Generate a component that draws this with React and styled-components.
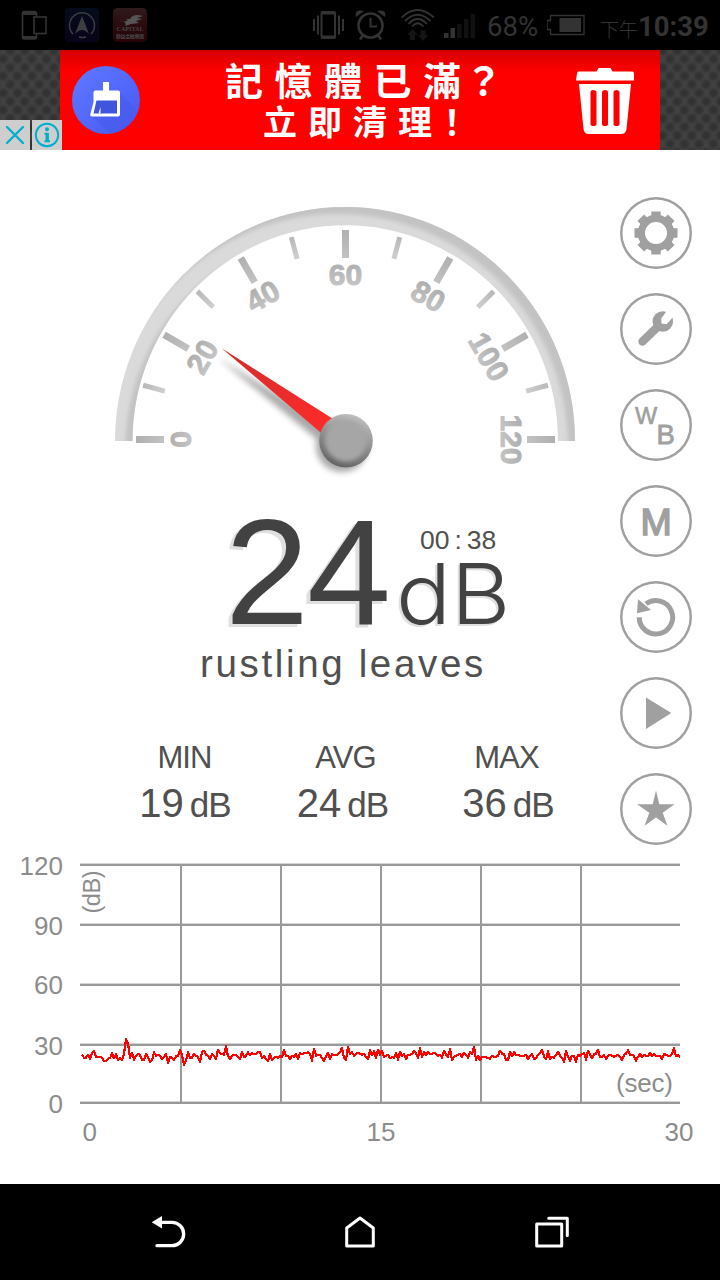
import React from 'react'
import styled, { createGlobalStyle } from 'styled-components'

const GlobalStyle = createGlobalStyle`
  body {
    margin: 0;
    background: #fff;
    font-family: 'Liberation Sans', 'Noto Sans CJK TC', sans-serif;
  }

  svg {
    display: block;
    flex: none;
  }
`;

const ICON = '#a0a0a0';
const STATUS = '#333';

const CX = 345.5;
const CY = 439.5;

// distance below the 30 dB line, in thirds of a pixel, one every 2px
const SAMPLES = [
  29, 40, 39, 31, 43, 25, 19, 38, 38, 36, 39, 49, 48, 42, 41, 26, 41, 29, 47, 41,
  45, 27, -16, -3, 39, 25, 45, 34, 28, 31, 47, 47, 28, 37, 51, 47, 23, 34, 30, 34,
  44, 37, 29, 54, 37, 40, 45, 35, 35, 17, 30, 60, 47, 23, 39, 39, 28, 33, 37, 53,
  23, 18, 30, 33, 44, 27, 33, 44, 15, 25, 29, 30, 5, 35, 43, 33, 32, 32, 37, 44,
  21, 38, 34, 23, 32, 26, 28, 27, 21, 23, 39, 34, 44, 49, 29, 45, 39, 36, 41, 35,
  37, 17, 35, 33, 44, 33, 37, 29, 43, 25, 29, 26, 25, 23, 27, 48, 13, 33, 31, 31,
  41, 48, 37, 25, 43, 28, 32, 32, 29, 23, 10, 41, 45, 7, 29, 23, 34, 28, 25, 28,
  31, 27, 38, 44, 17, 32, 20, 39, 15, 31, 19, 38, 33, 31, 41, 37, 39, 25, 45, 21,
  35, 27, 44, 31, 30, 28, 19, 25, 39, 11, 36, 23, 31, 23, 28, 27, 24, 29, 34, 30,
  39, 18, 30, 37, 14, 46, 37, 34, 31, 27, 37, 25, 30, 39, 23, 29, 7, 45, 33, 47,
  36, 38, 37, 41, 42, 34, 36, 36, 33, 18, 27, 29, 47, 47, 21, 35, 23, 30, 30, 34,
  35, 35, 30, 44, 34, 29, 43, 41, 30, 25, 15, 35, 44, 20, 43, 37, 39, 31, 21, 34,
  39, 51, 19, 37, 49, 33, 34, 51, 30, 33, 29, 25, 45, 19, 31, 41, 29, 27, 16, 37,
  37, 32, 43, 33, 30, 35, 36, 33, 31, 37, 47, 31, 28, 17, 31, 30, 34, 48, 37, 29,
  37, 30, 35, 35, 24, 34, 29, 35, 33, 35, 43, 28, 31, 33, 35, 28, 11, 35, 32, 37,
];

const STATS = [
  { label: 'MIN', value: 19, shift: 1 },
  { label: 'AVG', value: 24, shift: -6 },
  { label: 'MAX', value: 36, shift: 3 },
];

function StatusBar() {
  return (
    <Status>
      <StatusIcon $left={20} width="28" height="34" viewBox="20 8 28 34" fill="none" stroke={STATUS} strokeWidth="1.6">
        <path d="M36.5 16V13.5Q36.500 11.500 34.500 11.500H24.500Q22.500 11.500 22.500 13.500V37Q22.500 39 24.500 39H34.500Q36.500 39 36.500 37V34" />
        <path d="M22 13.500H37M22 37.500H37" strokeWidth="3" />
        <rect x="34" y="17" width="12" height="16.500" />
      </StatusIcon>
      <StatusIcon $left={17} width="34" height="34" viewBox="0 0 34 34">
        <defs>
          <linearGradient id="appBlue" x1="0" y1="0" x2="0" y2="1">
            <stop offset="0" stopColor="#050c1c" />
            <stop offset="1" stopColor="#08031a" />
          </linearGradient>
        </defs>
        <rect width="34" height="34" rx="4" fill="url(#appBlue)" />
        <path d="M8 26A12.500 12.500 0 1 1 26 26M14 29A12.500 12.500 0 0 0 21 29" fill="none" stroke="#3d3d42" strokeWidth="1.500" />
        <path d="M17 8L24 26Q17 18 10 26Z" fill="#3d3d42" />
      </StatusIcon>
      <StatusIcon $left={14} width="34" height="34" viewBox="0 0 34 34">
        <defs>
          <linearGradient id="appRed" x1="0" y1="0" x2="0" y2="1">
            <stop offset="0" stopColor="#301b1c" />
            <stop offset="0.45" stopColor="#2b0c0f" />
            <stop offset="1" stopColor="#260307" />
          </linearGradient>
        </defs>
        <rect width="34" height="34" rx="4.500" fill="url(#appRed)" />
        <path d="M6 12Q11 15 15 12Q10 10 17 11Q20 5 30 8L24 10L29 11L23 13L26 15L18 16L12 18Q15 14 6 12Z" fill="#555" />
        <text x="17" y="22.500" textAnchor="middle" fontSize="6" textLength="27" fontFamily="Liberation Serif, serif" fontWeight="700" fill="#454545">CAPITAL</text>
        <text x="17" y="30" textAnchor="middle" fontSize="5" textLength="28" fontFamily="Noto Sans CJK TC, sans-serif" fontWeight="700" fill="#454545">群益金融集團</text>
      </StatusIcon>
      <StatusIcon $left={165} width="34" height="34" viewBox="312 8 34 34" fill="none" stroke={STATUS} strokeWidth="2">
        <rect x="321.500" y="12" width="13.500" height="26" rx="2" />
        <path d="M321 13H335.500M321 37H335.500" strokeWidth="3" />
        <path d="M314 19V31M318 15.500V34.500M339 15.500V34.500M343 19V31" />
      </StatusIcon>
      <StatusIcon $left={9} width="34" height="34" viewBox="355 8 34 34" fill="none" stroke={STATUS} strokeWidth="2.600">
        <circle cx="370.500" cy="25.500" r="12" />
        <path d="M370.500 18V26.500H377" strokeWidth="2" />
        <path d="M363 35L360 39.500M378 35L381 39.500" />
        <path d="M356 17Q354 9 364 11Z M385 17Q387 9 377 11Z" fill={STATUS} stroke="none" />
      </StatusIcon>
      <StatusIcon $left={11} width="38" height="34" viewBox="400 8 38 34" fill="none" stroke={STATUS} strokeWidth="1.800">
        <path d="M401.500 17.500Q417.500 2.500 434 17.500M405 21Q417.500 8.500 430.500 21M408.500 24Q417.500 14 427 24M412 26.500Q417.500 20 423.500 26.500" />
        <path d="M412.500 29L407 35H410V40H415V35H418ZM423 41L428.500 35H425.500V30.500H420.500V35H418Z" fill="#151515" stroke="none" />
      </StatusIcon>
      <StatusIcon $left={6} width="34" height="34" viewBox="444 8 34 34">
        <path d="M444 33H448.500V38H444ZM450.500 28H455V38H450.500Z" fill={STATUS} />
        <path d="M457 24H461.500V38H457ZM464 19H468.500V38H464ZM470.500 14H475V38H470.500Z" fill="#111" />
      </StatusIcon>
      <Percent>68%</Percent>
      <StatusIcon $left={8} width="40" height="34" viewBox="548 8 40 34" fill="none" stroke={STATUS} strokeWidth="1.300">
        <path d="M551.500 15.500H585V34.500H551.500V29.500H548V20.500H551.500Z" />
        <rect x="560.500" y="18" width="21.500" height="14" fill={STATUS} stroke="none" />
      </StatusIcon>
      <Period>下午</Period>
      <Clock>10:39</Clock>
    </Status>
  )
}

function AdBanner() {
  return (
    <Ad>
      <AdBody>
        <svg width="68" height="68" viewBox="0 0 68 68">
          <defs>
            <linearGradient id="adBlue" x1="0" y1="0" x2="1" y2="1">
              <stop offset="0" stopColor="#5f78ff" />
              <stop offset="0.6" stopColor="#5066fb" />
              <stop offset="1" stopColor="#4557ee" />
            </linearGradient>
          </defs>
          <circle cx="34" cy="34" r="34" fill="url(#adBlue)" />
          <path d="M47 26L65 44Q58 64 38 67L19 50Z" fill="#4358e3" opacity="0.4" />
          <path d="M31 16H37V24.500H46Q48 24.500 48 26.500V48.500Q48 50.500 46 50.500H20Q17.500 50.500 18.500 47.500L21.500 36V26.500Q21.500 24.500 23.500 24.500H31Z" fill="#fff" />
          <path d="M24.500 34.500H45V47.500H21.500Z" fill="#4055dd" />
          <path d="M26.500 47.500L28.500 41V47.500Z" fill="#fff" />
        </svg>
        <AdText>
          <AdLine $size={38} $gap={11.5}>記憶體已滿<AdMark>？</AdMark></AdLine>
          <AdLine $size={34} $gap={11}>立即清理<AdMark>！</AdMark></AdLine>
        </AdText>
        <svg width="60" height="70" viewBox="575 65 60 70" fill="#fff">
          <path d="M577 73.500Q577 71.500 579 71.500H596.500L598.500 68H610.500L612.500 71.500H632Q634 71.500 634 73.500V80.500H576Z" />
          <path fillRule="evenodd" d="M579 84H631L626.500 129Q626 134 621 134H589Q584 134 583.500 129Z M593 90Q590.500 90 590.500 92.500V124Q590.500 126 593.500 126T596.500 124V92.500Q596.500 90 593 90Z M605 90Q602 90 602 92.500V124Q602 126 605 126T608 124V92.500Q608 90 605 90Z M616.500 90Q613.500 90 613.500 92.500V124Q613.500 126 616.500 126T619.500 124V92.500Q619.500 90 616.500 90Z" />
        </svg>
      </AdBody>
      <AdChoices>
        <AdChip>
          <svg width="30" height="30" viewBox="0 0 30 30" stroke="#00aecd" strokeWidth="2.300" strokeLinecap="round">
            <path d="M7 7L23 23M23 7L7 23" />
          </svg>
        </AdChip>
        <AdChip>
          <svg width="30" height="30" viewBox="0 0 30 30" fill="none" stroke="#00aecd">
            <circle cx="15" cy="15" r="11.200" strokeWidth="2" />
            <circle cx="15" cy="9.300" r="2" fill="#00aecd" stroke="none" />
            <path d="M12.500 13.700H15.500V21M12.500 21.200H18" strokeWidth="2" />
            <path d="M15.200 13V22" strokeWidth="3.400" />
          </svg>
        </AdChip>
      </AdChoices>
    </Ad>
  )
}

const BAND = 'M115 441A230 234 0 0 1 575 441H558A212.750 215.700 0 0 0 132.500 441Z';

function Gauge() {
  const ticks = Array.from({ length: 13 }, (_, i) => i);

  return (
    <GaugeSvg width="490" height="305" viewBox="100 195 490 305">
      <defs>
        <clipPath id="bandClip"><path d={BAND} /></clipPath>
        <filter id="soft" x="-20%" y="-20%" width="140%" height="140%"><feGaussianBlur stdDeviation="2" /></filter>
        <filter id="shade" x="-30%" y="-30%" width="160%" height="160%"><feGaussianBlur stdDeviation="3" /></filter>
        <linearGradient id="tick" x1="0" y1="0" x2="0" y2="1">
          <stop offset="0" stopColor="#b0b0b0" />
          <stop offset="1" stopColor="#c2c2c2" />
        </linearGradient>
        <linearGradient id="tickMinor" x1="0" y1="0" x2="0" y2="1">
          <stop offset="0" stopColor="#b8b8b8" />
          <stop offset="1" stopColor="#cfcfcf" />
        </linearGradient>
        <linearGradient id="digit" x1="0" y1="0" x2="0" y2="1">
          <stop offset="0.1" stopColor="#acacac" />
          <stop offset="0.9" stopColor="#c6c6c6" />
        </linearGradient>
        <linearGradient id="hub" x1="0.7" y1="0" x2="0.35" y2="1">
          <stop offset="0" stopColor="#c2c2c2" />
          <stop offset="0.5" stopColor="#8e8e8e" />
          <stop offset="1" stopColor="#626262" />
        </linearGradient>
        <linearGradient id="needle" gradientUnits="userSpaceOnUse" x1="222" y1="349" x2="330" y2="430">
          <stop offset="0" stopColor="#d22a2a" />
          <stop offset="0.5" stopColor="#e82c2c" />
          <stop offset="1" stopColor="#ff2a2a" />
        </linearGradient>
      </defs>

      <path d={BAND} fill="#dadada" />
      <g clipPath="url(#bandClip)">
        <path
          d="M0 100H700V600H0Z M108 470V448A230 234 0 0 1 568 448V470H551V448A212.750 215.700 0 0 0 125.500 448V470Z"
          fill="#c3c3c3"
          fillRule="evenodd"
          filter="url(#soft)"
        />
      </g>

      {ticks.map(i => {
        const major = i % 2 === 0;
        const w = major ? 7 : 5;
        return (
          <rect
            key={i}
            x={CX - w / 2}
            y={CY - 209.5}
            width={w}
            height={major ? 28 : 22.5}
            fill={major ? 'url(#tick)' : 'url(#tickMinor)'}
            transform={`rotate(${i * 15 - 90} ${CX} ${CY})`}
          />
        )
      })}

      {ticks.filter(i => i % 2 === 0).map(i => (
        <text
          key={i}
          x={CX}
          y={CY - 155}
          textAnchor="middle"
          fontSize="30"
          fontWeight="700"
          fill="url(#digit)"
          stroke="url(#digit)"
          strokeWidth="1"
          transform={`rotate(${i * 15 - 90} ${CX} ${CY})`}
        >
          {i * 10}
        </text>
      ))}

      <g filter="url(#shade)" opacity="0.34">
        <path d="M217 357L340 433L326 447Z" />
        <circle cx="342" cy="446" r="26" />
      </g>
      <path d="M221.700 348.300L343 425.300L330.600 441Z" fill="url(#needle)" />
      <circle cx="346" cy="440.700" r="26.800" fill="url(#hub)" />
      <circle cx="346" cy="440.500" r="21" fill="#a6a6a6" filter="url(#soft)" />
    </GaugeSvg>
  )
}

function Chart() {
  const points = SAMPLES.map((s, i) => `${82 + i * 2},${(1044.6 + s / 3).toFixed(1)}`).join(' ');

  return (
    <ChartSvg width="720" height="334" viewBox="0 850 720 334">
      {[864, 924, 984, 1044, 1102].map(y => (
        <g key={y}>
          <rect x="80" y={y - 1} width="600" height="1" fill="#d4d4d4" />
          <rect x="80" y={y} width="600" height="2" fill="#999" />
        </g>
      ))}
      {[180, 280, 380, 480, 580].map(x => (
        <rect key={x} x={x} y="865" width="2" height="238" fill="#999" />
      ))}
      <g textAnchor="end">
        <text x="63" y="875">120</text>
        <text x="63" y="934.500">90</text>
        <text x="63" y="993.800">60</text>
        <text x="63" y="1054.500">30</text>
        <text x="63" y="1113">0</text>
      </g>
      <g textAnchor="middle">
        <text x="89.700" y="1140.500">0</text>
        <text x="381" y="1140.500">15</text>
        <text x="679" y="1140.500">30</text>
      </g>
      <text x="616" y="1091.700" fontSize="26" textLength="57">(sec)</text>
      <text transform="translate(99.500 913.500) rotate(-90)" fontSize="23.500" textLength="43">(dB)</text>
      <polyline points={points} fill="none" stroke="#f00" strokeWidth="2.200" strokeLinejoin="round" shapeRendering="crispEdges" />
    </ChartSvg>
  )
}

function ToolButton({ children }) {
  return (
    <RoundButton>
      <svg width="72" height="72" viewBox="0 0 72 72" fill={ICON}>{children}</svg>
    </RoundButton>
  )
}

function Tools() {
  return (
    <ToolColumn>
      <ToolButton>
        <circle cx="36" cy="36" r="14.600" fill="none" stroke={ICON} strokeWidth="7.200" />
        {[0, 45, 90, 135, 180, 225, 270, 315].map(a => (
          <path key={a} d="M29.500 20L31.300 18V14.500H40.700V18L42.500 20Z" transform={`rotate(${a} 36 36)`} />
        ))}
      </ToolButton>
      <ToolButton>
        <path d="M22.500 48.500L40 31.500" stroke={ICON} strokeWidth="8.400" strokeLinecap="round" />
        <circle cx="42.800" cy="28.500" r="10.300" />
        <path d="M47.500 17L41.200 25.500L41.500 30.500L46.500 31.300L54 23L57 15Z" fill="#fff" />
      </ToolButton>
      <ToolButton>
        <text x="15" y="35" fontSize="23.500" stroke={ICON} strokeWidth="0.600">W</text>
        <text x="36.500" y="55.300" fontSize="27.500" stroke={ICON} strokeWidth="0.800">B</text>
      </ToolButton>
      <ToolButton>
        <text x="36.200" y="49.800" fontSize="37.500" stroke={ICON} strokeWidth="1.600" textAnchor="middle">M</text>
      </ToolButton>
      <ToolButton>
        <path d="M19.200 36.200A16.700 16.700 0 1 0 26 22.800" fill="none" stroke={ICON} strokeWidth="5" />
        <path d="M18 18.300L17 32.200L31 29Z" />
      </ToolButton>
      <ToolButton>
        <path d="M26 20.500V52L51.300 36Z" />
      </ToolButton>
      <ToolButton>
        <path d="M36 17.500L39.300 31.300H54.500L42.700 39.700L47.500 52.800L36 44.600L24.500 52.800L29.300 39.700L17 31.300H32.700Z" />
      </ToolButton>
    </ToolColumn>
  )
}

function NavBar() {
  return (
    <Nav>
      <svg width="40" height="40" viewBox="148 1212 40 40" fill="none" stroke="#fff" strokeWidth="3.300" strokeLinecap="round">
        <path d="M161 1222.300H172A11.700 11.700 0 0 1 172 1245.700H157" />
        <path d="M151.700 1222.300L162 1216V1228.500Z" fill="#fff" stroke="none" />
      </svg>
      <svg width="40" height="40" viewBox="340 1212 40 40" fill="none" stroke="#fff" strokeWidth="3" strokeLinejoin="round">
        <path d="M346.700 1246V1228L360 1218L373.300 1228V1246Z" />
      </svg>
      <svg width="40" height="40" viewBox="532 1212 40 40" fill="none" stroke="#fff" strokeWidth="3" strokeLinecap="round" strokeLinejoin="round">
        <rect x="536.700" y="1224" width="25" height="22" />
        <path d="M548.700 1218.300H567.300V1235.500" />
      </svg>
    </Nav>
  )
}

const App = () => {
  return (
    <Screen>
      <GlobalStyle />
      <StatusBar />
      <AdBanner />
      <Main>
        <Meter>
          <Gauge />
          <Readout>
            <Level>24</Level>
            <div>
              <Elapsed>00<Colon>:</Colon>38</Elapsed>
              <Unit>dB</Unit>
            </div>
          </Readout>
          <Noise>rustling leaves</Noise>
          <Stats>
            {STATS.map(s => (
              <Stat key={s.label} $shift={s.shift}>
                <h3>{s.label}</h3>
                <p>{s.value}<small>dB</small></p>
              </Stat>
            ))}
          </Stats>
        </Meter>
        <Tools />
      </Main>
      <Chart />
      <NavBar />
    </Screen>
  )
}

const Screen = styled.div`
  display: flex;
  flex-direction: column;
  width: 720px;
  height: 1280px;
  overflow: hidden;
  background: #fff;
`;

const Status = styled.header`
  display: flex;
  align-items: center;
  height: 50px;
  background: #000;
  color: ${STATUS};
  font-family: Roboto, 'Noto Sans CJK TC', sans-serif;
  white-space: nowrap;
`;

const StatusIcon = styled.svg`
  margin-left: ${props => props.$left}px;
`;

const Percent = styled.span`
  width: 52px;
  margin-left: 9px;
  padding-top: 3px;
  font-size: 27.5px;
`;

const Period = styled.span`
  width: 38px;
  margin-left: 13px;
  padding-top: 6px;
  font-size: 19px;
  font-weight: 300;
`;

const Clock = styled.span`
  padding-top: 3px;
  font-size: 27.5px;
  font-weight: 700;
`;

const Ad = styled.section`
  position: relative;
  display: flex;
  justify-content: center;
  height: 100px;
  background-color: #414141;
  background-image:
    radial-gradient(circle at 50% 50%, #303030 0, #343434 3px, transparent 6px),
    radial-gradient(circle at 50% 50%, #303030 0, #343434 3px, transparent 6px);
  background-size: 14.5px 17px;
  background-position: 3px -8px, 10.2px 0.5px;
`;

const AdBody = styled.div`
  display: flex;
  align-items: center;
  width: 600px;
  padding: 0 25px 0 12px;
  box-sizing: border-box;
  background: linear-gradient(#d60000, #f00 22px);
`;

const AdText = styled.div`
  flex: 1;
  padding-bottom: 1px;
`;

const AdLine = styled.div`
  padding-left: ${props => (props.$size > 36 ? 85 : 123)}px;
  color: #fff;
  font-family: 'Noto Sans CJK TC', sans-serif;
  font-size: ${props => props.$size}px;
  font-weight: 700;
  line-height: 42px;
  letter-spacing: ${props => props.$gap}px;
  white-space: nowrap;
`;

const AdMark = styled.span`
  margin-left: -8px;
`;

const AdChoices = styled.div`
  position: absolute;
  left: 0;
  bottom: 0;
  display: flex;
  gap: 2px;
`;

const AdChip = styled.div`
  width: 30px;
  height: 30px;
  background: #cecece;
`;

const Main = styled.main`
  display: flex;
  height: 700px;
`;

const Meter = styled.div`
  width: 620px;
`;

const GaugeSvg = styled.svg`
  margin: 45px 0 0 100px;
`;

const Readout = styled.div`
  display: flex;
  height: 140px;
  padding-left: 225px;
  color: #424242;
`;

const Level = styled.div`
  width: 173px;
  padding-top: 2px;
  font-size: 151px;
  line-height: 140px;
  letter-spacing: -2px;
  text-shadow: -4px 3px 0 #e0e0e0;
`;

const Elapsed = styled.div`
  padding: 25px 0 4px 22px;
  color: #505050;
  font-size: 26.5px;
  line-height: 30px;
`;

const Colon = styled.span`
  margin: 0 5px;
`;

const Unit = styled.div`
  font-family: Inter, sans-serif;
  font-size: 84px;
  font-weight: 300;
  line-height: 70px;
  text-shadow: -2px 2px 0 #e0e0e0;
  transform: translateX(-2px) scaleX(1.09);
  transform-origin: 0 50%;
`;

const Noise = styled.div`
  margin-top: -1px;
  padding-left: 200px;
  color: #505050;
  font-size: 38.5px;
  line-height: 50px;
  letter-spacing: 2.65px;
`;

const Stats = styled.div`
  display: grid;
  grid-template-columns: repeat(3, 161px);
  padding: 48px 0 0 104px;
`;

const Stat = styled.div`
  color: #505050;
  text-align: center;

  h3 {
    margin: 0;
    font-size: 31px;
    font-weight: 400;
    line-height: 41px;
    letter-spacing: -0.9px;
  }

  p {
    margin: 0;
    font-size: 40px;
    line-height: 50px;
    text-indent: ${props => props.$shift}px;
  }

  small {
    margin-left: 6px;
    font-size: 35px;
    letter-spacing: -1px;
  }
`;

const ToolColumn = styled.div`
  display: flex;
  flex-direction: column;
  gap: 24px;
  padding-top: 47px;
`;

const RoundButton = styled.button`
  width: 72px;
  height: 72px;
  padding: 0;
  border: none;
  border-radius: 50%;
  background: none;
  box-shadow: inset 0 0 0 2.5px ${ICON};
  cursor: pointer;
  font-family: inherit;
`;

const ChartSvg = styled.svg`
  text {
    fill: #8c8c8c;
  }

  g text {
    font-size: 26px;
  }
`;

const Nav = styled.nav`
  display: grid;
  grid-template-columns: repeat(3, 192px);
  justify-content: center;
  justify-items: center;
  align-items: center;
  height: 96px;
  background: #000;
`;

export default App
